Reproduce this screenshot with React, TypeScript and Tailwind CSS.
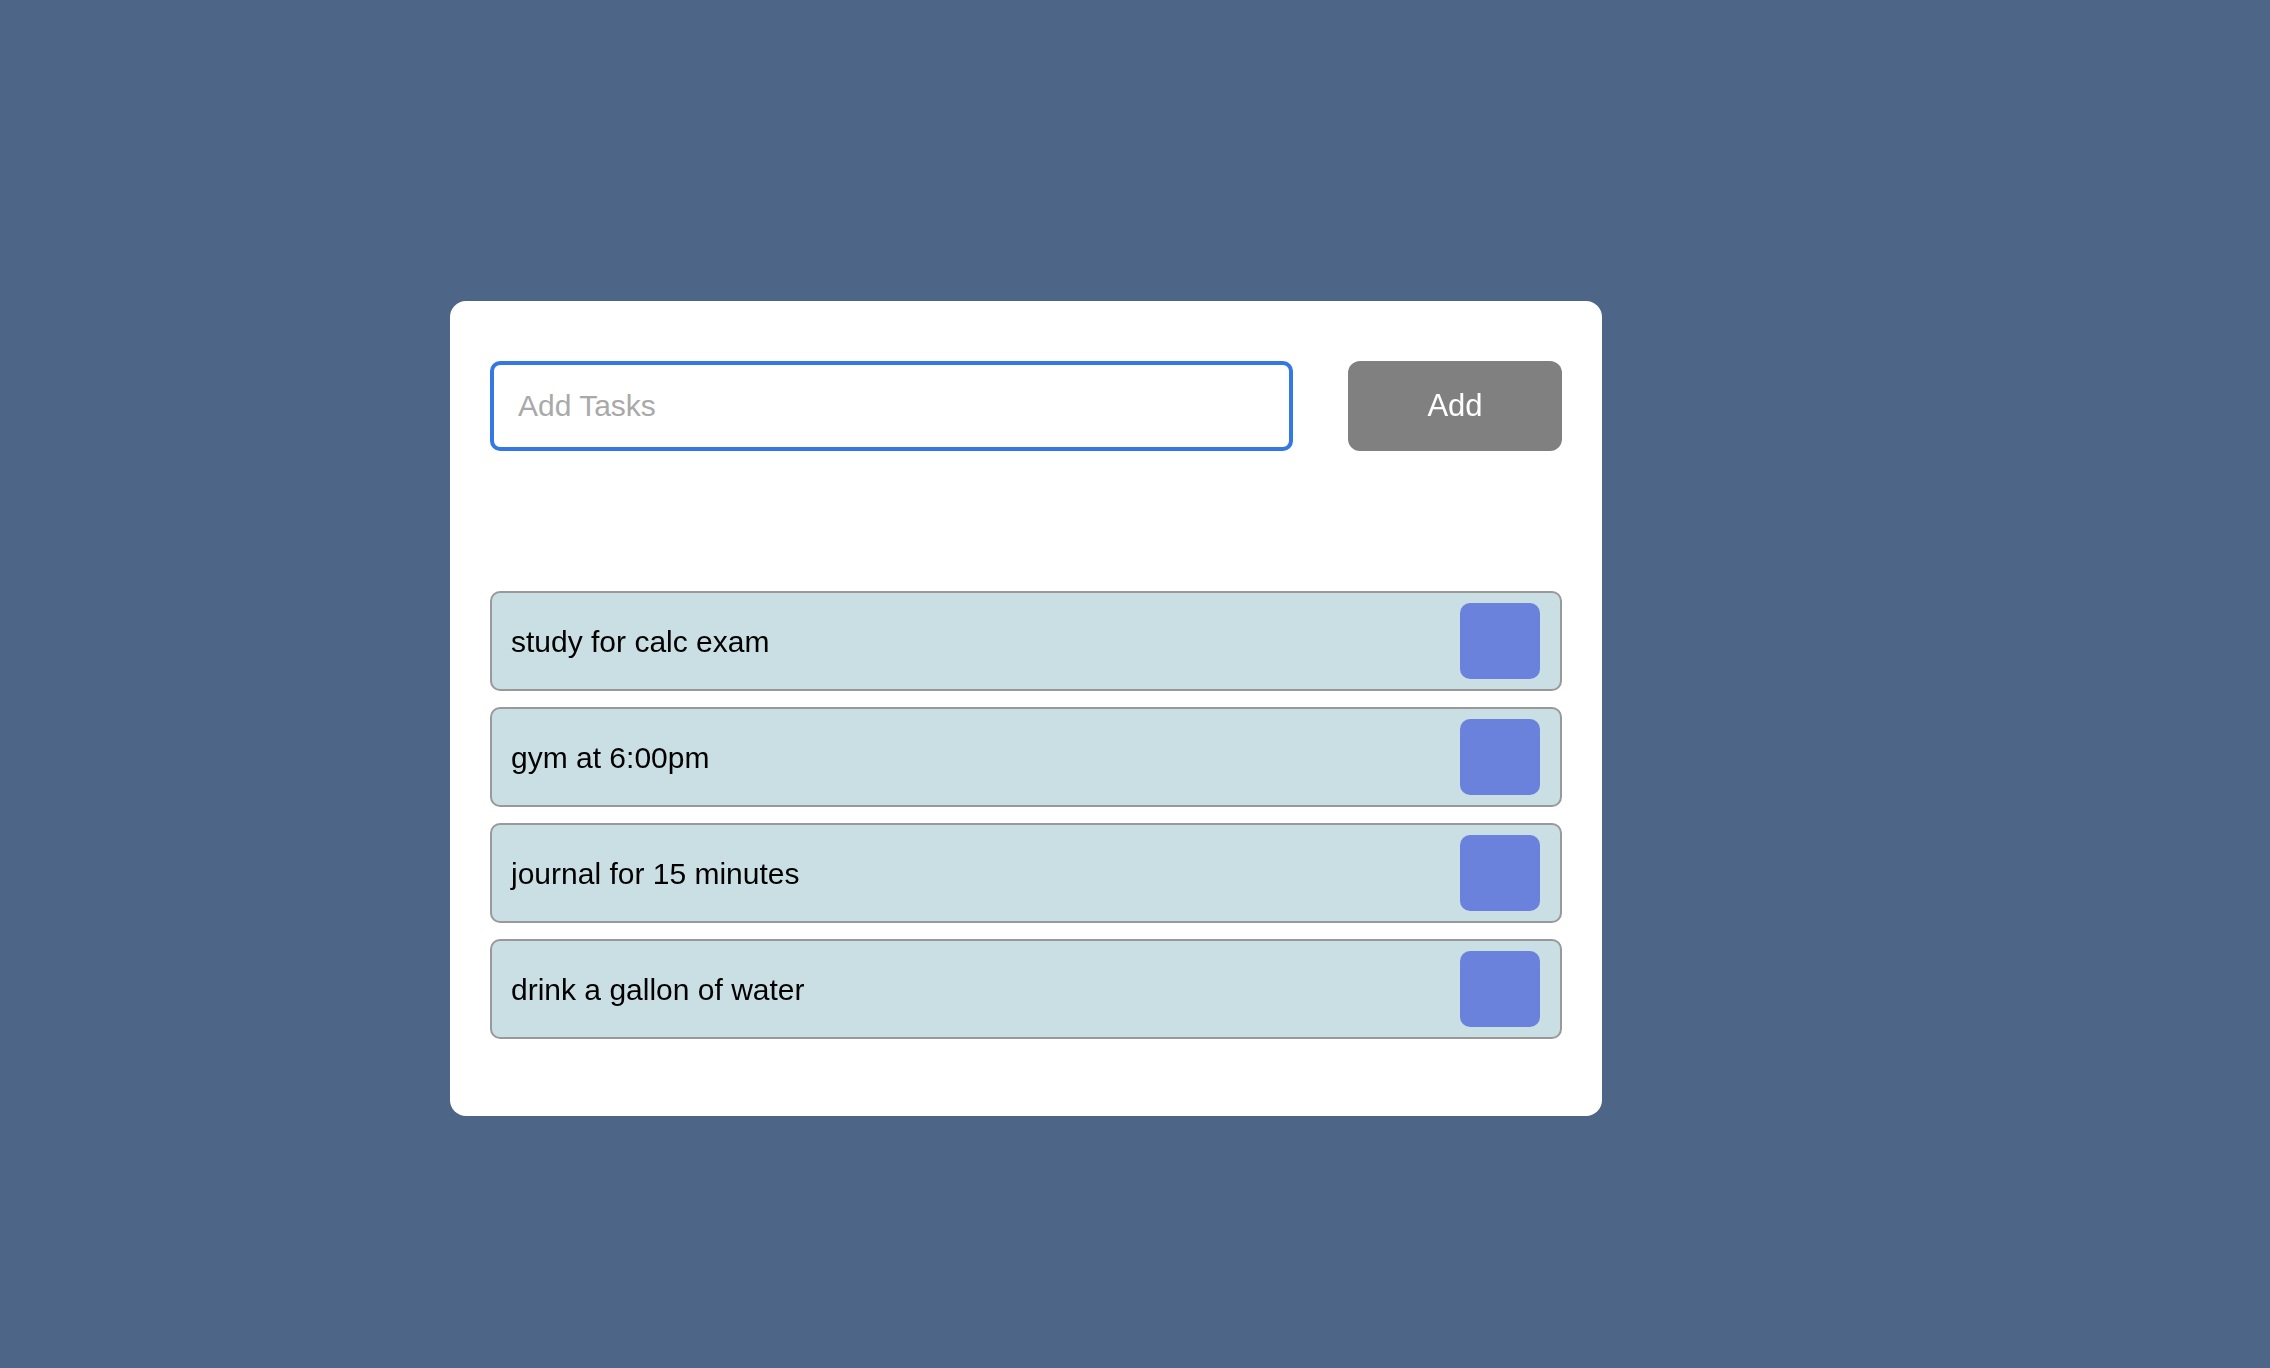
import { useState } from 'react'

const initialTasks = [
  'study for calc exam',
  'gym at 6:00pm',
  'journal for 15 minutes',
  'drink a gallon of water',
]

function TaskRow({ text, onDone }: { text: string; onDone: () => void }) {
  return (
    <li className="flex h-[100px] items-center justify-between rounded-[10px] border-2 border-[#999999] bg-[#cadfe3] pl-[19px] pr-[20px]">
      <span className="text-[30px] text-black">{text}</span>
      <button
        type="button"
        aria-label="Complete task"
        onClick={onDone}
        className="h-[76px] w-[80px] rounded-[10px] bg-[#6b82dc]"
      />
    </li>
  )
}

export default function App() {
  const [tasks, setTasks] = useState(initialTasks)
  const [draft, setDraft] = useState('')

  return (
    <div className="min-h-screen bg-[#4d6586] pl-[450px] pt-[301px] font-['Liberation_Sans',Arial,sans-serif]">
      <div className="w-[1152px] rounded-[16px] bg-white px-[40px] pb-[77px] pt-[60px]">
        <form
          className="flex items-center gap-[55px]"
          onSubmit={(e) => {
            e.preventDefault()
            if (!draft.trim()) return
            setTasks([...tasks, draft.trim()])
            setDraft('')
          }}
        >
          <input
            autoFocus
            value={draft}
            onChange={(e) => setDraft(e.target.value)}
            placeholder="Add Tasks"
            className="h-[90px] w-[803px] rounded-[10px] border-[4px] border-[#3577e3] px-[24px] text-[30px] text-black caret-black outline-none placeholder:text-[#a9a9a9]"
          />
          <button
            type="submit"
            className="h-[90px] w-[214px] rounded-[12px] bg-[#808080] text-[31px] text-white"
          >
            Add
          </button>
        </form>

        <ul className="mt-[140px] flex flex-col gap-[16px]">
          {tasks.map((t, i) => (
            <TaskRow key={t + i} text={t} onDone={() => setTasks(tasks.filter((_, j) => j !== i))} />
          ))}
        </ul>
      </div>
    </div>
  )
}
